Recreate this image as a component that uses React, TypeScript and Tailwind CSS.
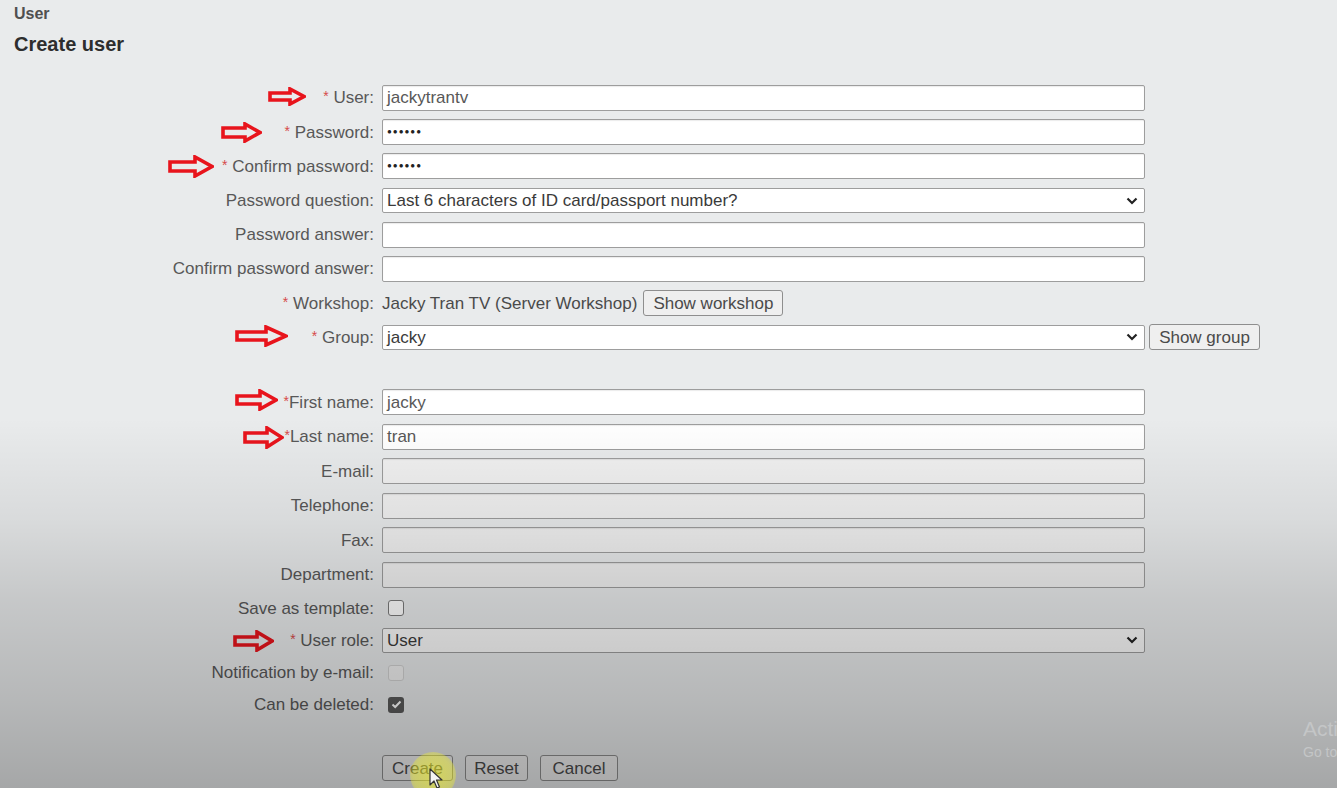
import React from "react";

function Arrow({ className, w, h }: { className: string; w: number; h: number }) {
  const head = Math.round(w * 0.42);
  const shaftTop = Math.round(h * 0.3);
  const shaftBot = h - shaftTop;
  const pts = `2,${shaftTop} ${w - head},${shaftTop} ${w - head},2 ${w - 2},${h / 2} ${w - head},${h - 2} ${w - head},${shaftBot} 2,${shaftBot}`;
  return (
    <svg className={className} width={w} height={h} viewBox={`0 0 ${w} ${h}`}>
      <polygon points={pts} fill="none" stroke="#e8141c" strokeWidth="3.6" strokeLinejoin="miter" />
    </svg>
  );
}

function Label({ children, req, tight }: { children: React.ReactNode; req?: boolean; tight?: boolean }) {
  return (
    <div className="w-[374px] shrink-0 text-right text-[#585858] whitespace-nowrap">
      {req && <span className="text-[#d64a4a] text-[14px] relative top-[-2px]">*</span>}
      {req && !tight && " "}
      {children}
    </div>
  );
}

function TextBox({ value, disabled, dots }: { value?: string; disabled?: boolean; dots?: boolean }) {
  return (
    <div
      className={
        "ml-[8px] w-[763px] h-[26px] border border-[#9d9d9d] rounded-[2px] px-[4px] flex items-center shadow-[inset_0_1px_1px_rgba(0,0,0,0.08)] " +
        (disabled ? "bg-[#f1f1f1]" : "bg-white")
      }
    >
      {dots ? (
        <span className="text-[#222] text-[8px] tracking-[1px] leading-none">●●●●●●</span>
      ) : (
        <span className="text-[#585858]">{value}</span>
      )}
    </div>
  );
}

function Chevron() {
  return (
    <svg width="12" height="8" viewBox="0 0 12 8">
      <polyline points="1.5,1.5 6,6 10.5,1.5" fill="none" stroke="#222" strokeWidth="2.2" />
    </svg>
  );
}

function Select({ value, bg }: { value: string; bg?: string }) {
  return (
    <div
      className={
        "ml-[8px] w-[763px] h-[25px] border border-[#9d9d9d] rounded-[2px] pl-[4px] pr-[6px] flex items-center justify-between " +
        (bg ?? "bg-white")
      }
    >
      <span className="text-[#3a3a3a]">{value}</span>
      <Chevron />
    </div>
  );
}

function Button({ children, className }: { children: React.ReactNode; className?: string }) {
  return (
    <div
      className={
        "h-[26px] border border-[#8e8e8e] rounded-[3px] bg-[#efefef] text-[#4a4a4a] flex items-center justify-center " +
        (className ?? "")
      }
    >
      {children}
    </div>
  );
}

function Check({ checked, disabled }: { checked?: boolean; disabled?: boolean }) {
  if (checked) {
    return (
      <div className="ml-[14px] w-[16px] h-[16px] rounded-[3px] bg-[#5a5a5a] flex items-center justify-center">
        <svg width="11" height="9" viewBox="0 0 11 9">
          <polyline points="1.5,4.5 4.2,7 9.5,1.5" fill="none" stroke="#fff" strokeWidth="2" />
        </svg>
      </div>
    );
  }
  return (
    <div
      className={
        "ml-[14px] w-[16px] h-[16px] rounded-[3px] border " +
        (disabled ? "border-[#d2d2d2] bg-[#f2f2f2]" : "border-[#7a7a7a] bg-white")
      }
    />
  );
}

export default function App() {
  return (
    <div
      className="relative w-[1337px] h-[788px] overflow-hidden bg-[#e9ebec] text-[17px] leading-none"
      style={{ fontFamily: '"Liberation Sans", Arial, sans-serif' }}
    >
      <div className="px-[14px] pt-[5px]">
        <div className="text-[16px] leading-[18px] font-bold text-[#505050]">User</div>
        <div className="mt-[9px] text-[20px] leading-[24px] font-bold text-[#2e2e2e]">Create user</div>
      </div>

      <div className="mt-[24.9px] flex flex-col">
        <div className="h-[34.2px] flex items-center">
          <Label req>User:</Label>
          <TextBox value="jackytrantv" />
        </div>
        <div className="h-[34.2px] flex items-center">
          <Label req>Password:</Label>
          <TextBox dots />
        </div>
        <div className="h-[34.2px] flex items-center">
          <Label req>Confirm password:</Label>
          <TextBox dots />
        </div>
        <div className="h-[34.2px] flex items-center">
          <Label>Password question:</Label>
          <Select value="Last 6 characters of ID card/passport number?" />
        </div>
        <div className="h-[34.2px] flex items-center">
          <Label>Password answer:</Label>
          <TextBox />
        </div>
        <div className="h-[34.2px] flex items-center">
          <Label>Confirm password answer:</Label>
          <TextBox />
        </div>
        <div className="h-[34.2px] flex items-center">
          <Label req>Workshop:</Label>
          <span className="ml-[8px] text-[#4a4a4a]">Jacky Tran TV (Server Workshop)</span>
          <Button className="ml-[6px] w-[140px] h-[25px]">Show workshop</Button>
        </div>
        <div className="h-[34.2px] flex items-center">
          <Label req>Group:</Label>
          <Select value="jacky" />
          <Button className="ml-[4px] w-[111px]">Show group</Button>
        </div>

        <div className="h-[30.8px]" />

        <div className="h-[34.5px] flex items-center">
          <Label req tight>First name:</Label>
          <TextBox value="jacky" />
        </div>
        <div className="h-[34.5px] flex items-center">
          <Label req tight>Last name:</Label>
          <TextBox value="tran" />
        </div>
        <div className="h-[34.5px] flex items-center">
          <Label>E-mail:</Label>
          <TextBox disabled />
        </div>
        <div className="h-[34.5px] flex items-center">
          <Label>Telephone:</Label>
          <TextBox disabled />
        </div>
        <div className="h-[34.5px] flex items-center">
          <Label>Fax:</Label>
          <TextBox disabled />
        </div>
        <div className="h-[34.5px] flex items-center">
          <Label>Department:</Label>
          <TextBox disabled />
        </div>

        <div className="h-[32.2px] flex items-center">
          <Label>Save as template:</Label>
          <Check />
        </div>
        <div className="h-[32.2px] flex items-center">
          <Label req>User role:</Label>
          <Select value="User" bg="bg-[#fafafa]" />
        </div>
        <div className="h-[32.2px] flex items-center">
          <Label>Notification by e-mail:</Label>
          <Check disabled />
        </div>
        <div className="h-[32.2px] flex items-center">
          <Label>Can be deleted:</Label>
          <Check checked />
        </div>

        <div className="mt-[34.4px] h-[26px] flex items-center pl-[382px] gap-[12px]">
          <Button className="w-[71px]">Create</Button>
          <Button className="w-[63px]">Reset</Button>
          <Button className="w-[78px]">Cancel</Button>
        </div>
      </div>

      {/* annotation arrows */}
      <Arrow className="absolute left-[268px] top-[87px]" w={38} h={19} />
      <Arrow className="absolute left-[221px] top-[122px]" w={41} h={21} />
      <Arrow className="absolute left-[168px] top-[155px]" w={46} h={23} />
      <Arrow className="absolute left-[235px] top-[325px]" w={53} h={22} />
      <Arrow className="absolute left-[235px] top-[389px]" w={43} h={22} />
      <Arrow className="absolute left-[243px] top-[426px]" w={41} h={23} />
      <Arrow className="absolute left-[233px] top-[630px]" w={41} h={22} />

      {/* bottom darkening overlay (video) */}
      <div className="pointer-events-none absolute inset-0 bg-[linear-gradient(to_bottom,rgba(0,0,0,0)_0%,rgba(0,0,0,0)_53%,rgba(0,0,0,0.07)_66%,rgba(0,0,0,0.15)_76%,rgba(0,0,0,0.22)_89%,rgba(0,0,0,0.29)_100%)]" />

      {/* activate windows watermark, cut by the screen edge as in the capture */}
      <div className="pointer-events-none absolute left-[1303px] top-[717px] w-[34px] overflow-hidden whitespace-nowrap text-[#c4c6c7]">
        <div className="text-[21px] leading-[24px]">Acti</div>
        <div className="text-[14px] leading-[18px] mt-[2px]">Go to</div>
      </div>

      {/* cursor highlight */}
      <div className="pointer-events-none absolute left-[410px] top-[752px] w-[46px] h-[46px] rounded-full bg-[radial-gradient(circle,rgba(240,240,40,0.6)_0%,rgba(240,240,40,0.45)_60%,rgba(240,240,40,0)_100%)]" />
      <svg className="pointer-events-none absolute left-[429px] top-[768px]" width="14" height="22" viewBox="0 0 14 22">
        <path d="M1 1 L1 17 L5 13 L8 20 L10.5 19 L7.5 12 L13 12 Z" fill="#f4f4f4" stroke="#333" strokeWidth="1.2" strokeLinejoin="round" />
      </svg>
    </div>
  );
}
